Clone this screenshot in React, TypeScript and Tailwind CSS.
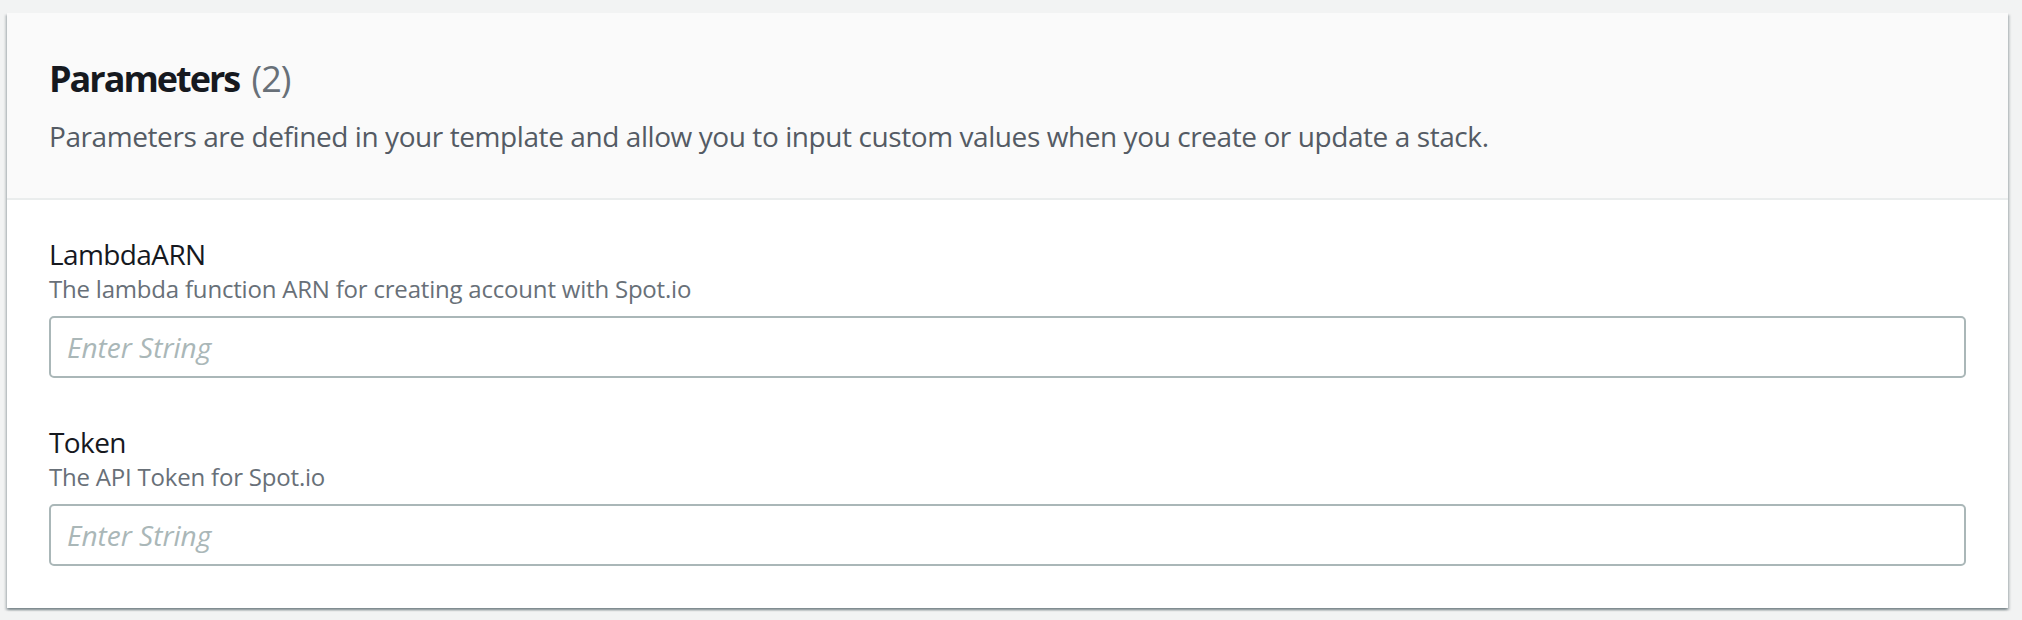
import React from "react";

const font = { fontFamily: '"Open Sans", "Noto Sans", sans-serif' };

function Field({ label, desc }: { label: string; desc: string }) {
  return (
    <div className="flex flex-col">
      <div className="text-[28px] leading-[36px] tracking-[-0.6px] text-[#16191f]">{label}</div>
      <div className="text-[24px] leading-[32px] tracking-[-0.2px] text-[#687078] mt-[1px]">{desc}</div>
      <div className="mt-[11px] h-[62px] rounded-[5px] border-2 border-[#aab7b8] bg-white flex items-center px-[16px]">
        <span className="italic text-[28px] text-[#aab7b8]">Enter String</span>
      </div>
    </div>
  );
}

export default function App() {
  return (
    <div className="w-[2022px] h-[620px] bg-[#f2f3f3] pt-[13px] pl-[7px]" style={font}>
      <div className="w-[2001px] h-[595px] bg-white shadow-[0_2px_2px_0_rgba(0,28,36,0.3),2px_2px_2px_0_rgba(0,28,36,0.15),-2px_2px_2px_0_rgba(0,28,36,0.15)] flex flex-col">
        <div className="h-[187px] bg-[#fafafa] border-b-2 border-[#eaeded] px-[42px] pt-[44px]">
          <div className="text-[36px] leading-[44px]">
            <span className="font-bold tracking-[-2px] text-[#16191f]">Parameters</span>{" "}
            <span className="ml-[3px] tracking-[-1px] text-[#687078]">(2)</span>
          </div>
          <div className="mt-[17px] text-[28px] leading-[36px] tracking-[-0.42px] text-[#545b64]">
            Parameters are defined in your template and allow you to input custom values when you create or update a stack.
          </div>
        </div>
        <div className="px-[42px] pt-[36px] flex flex-col gap-[46px]">
          <Field label="LambdaARN" desc="The lambda function ARN for creating account with Spot.io" />
          <Field label="Token" desc="The API Token for Spot.io" />
        </div>
      </div>
    </div>
  );
}
